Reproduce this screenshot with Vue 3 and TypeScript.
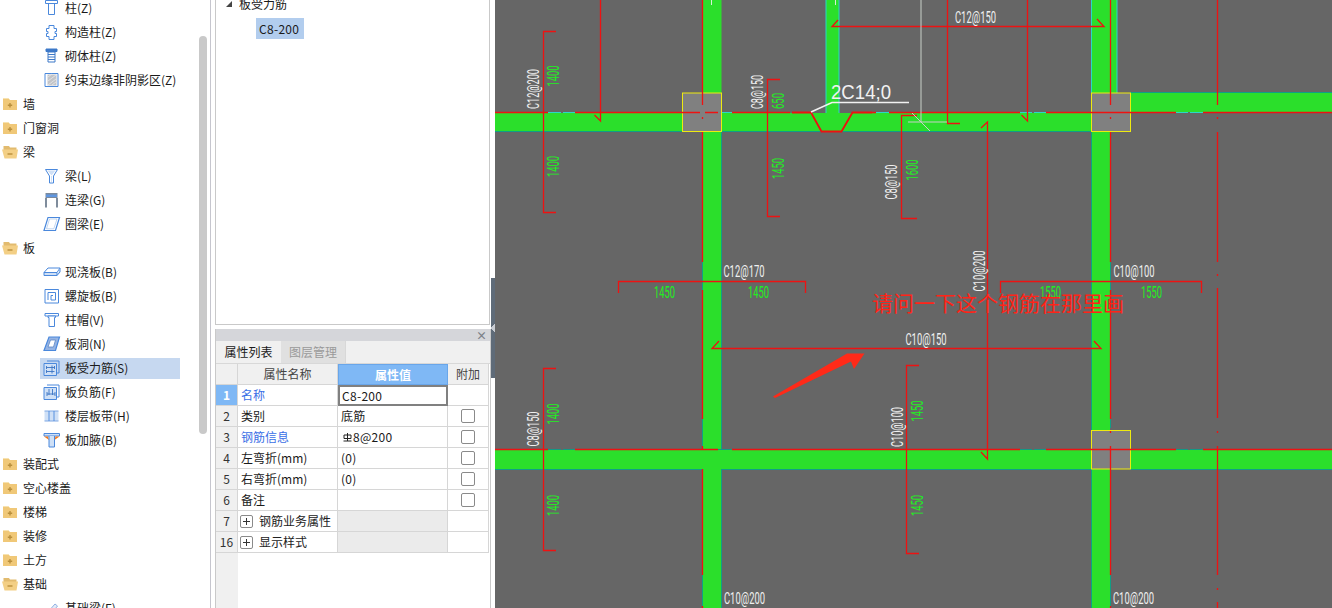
<script setup lang="ts">
type Shape = { d: string; s?: string; f?: string; w?: number }
type Row = { label: string; kind: 'closed' | 'open' | 'leaf'; icon?: string; selected?: boolean }

const B = '#4a88dc'
const L = '#cfe0f6'
const icons: Record<string, Shape[]> = {
  column: [{ d: 'M2.5 1.5h12v3h-12zM5.5 4.5h6v11h-6z', s: B, f: '#fff' }],
  gz: [{ d: 'M6 2.5h5v3h2.5v3H12v2h1.5v3H11v3H6v-3H3.5v-3H5v-2H3.5v-3H6z', s: B, f: '#fff' }],
  brick: [
    { d: 'M3 2h11v2.5H3z', s: '#3d78c8', f: '#3d78c8' },
    { d: 'M5 5h7v10H5z', s: '#3d78c8', f: '#fff' },
    { d: 'M5 7.5h7M5 10h7M5 12.5h7', s: '#3d78c8' }
  ],
  edge: [
    { d: 'M2 2.5h13v13H2z', s: B, f: '#fff' },
    { d: 'M4.5 3.5h9v11h-9z', f: '#c2c4c8' },
    { d: 'M5 6l4-3M5 10l8-6M5 14l8-6M9 14l4-3', s: '#e8e8ea', w: 0.8 }
  ],
  beam: [
    { d: 'M2.5 2.5h12l-4 6.5v7h-4V9z', s: B, f: '#fff' },
    { d: 'M4.5 3.5h8l-4 5z', f: L },
    { d: 'M8.5 9v6', s: L }
  ],
  lintel: [
    { d: 'M2.5 2h12v5h-12z', f: '#7c8a9c' },
    { d: 'M3 3.5h11v2.5H3z', f: '#5f96e0' },
    { d: 'M3 7v9.5M14 7v9.5', s: '#7f8c9c', w: 2 }
  ],
  ring: [
    { d: 'M5 2.5h11.5L12.5 15.5H1z', s: B, f: '#fff', w: 1.2 },
    { d: 'M6.5 4h7.5L10.8 13.8H3.5z', s: '#a8c4ea', w: 0.7 }
  ],
  slab: [
    { d: 'M5 5h12l-3 4.5H1z', s: B, f: '#fff' },
    { d: 'M1 9.5h13v3H1zM14 12.5l3-3.5V5', s: B, f: L }
  ],
  spiral: [
    { d: 'M2 2.5h13.5v13.5H2z', s: B, f: '#fff' },
    { d: 'M5 13V5.5h7.5V13H8V8.5h2', s: B, f: 'none' }
  ],
  cap: [
    { d: 'M2 2.5h13.5V5H2z', s: B, f: '#fff' },
    { d: 'M5 5h7.5v1.5h-1V15.5H6V6.5H5z', s: B, f: '#fff' }
  ],
  hole: [
    { d: 'M6 2h10.5L12.5 15.5H1z', s: B, f: '#95b4e4', w: 1.2 },
    { d: 'M7.5 5h5L10.5 12H5z', s: '#5c86c6', f: '#fff', w: 0.8 }
  ],
  main: [
    { d: 'M1 4.5h12.5v12H1z', s: B, f: L },
    { d: 'M4 2h12v12h-2.5', s: B, f: 'none' },
    { d: 'M3.5 8.5h8M3.5 12.5h8M9 6.5v8M3.5 7v3M3.5 11v3M11.5 7v3', s: '#3a74c4', w: 0.9 }
  ],
  neg: [
    { d: 'M1 4.5h12.5v12H1z', s: B, f: L },
    { d: 'M4 2h12v12h-2.5', s: B, f: 'none' },
    { d: 'M6 6v6M9.5 6v6M4 11h8M4 9v4M12 9v4', s: '#3a74c4', w: 0.9 }
  ],
  strip: [
    { d: 'M1.5 4h14v10h-14z', f: '#cfe0f6' },
    { d: 'M1.5 4h14M1.5 14h14', s: '#7ea8e4' },
    { d: 'M6 4v10M11 4v10', s: B, w: 0.9 }
  ],
  haunch: [
    { d: 'M1 2.5h15.5V5H1z', s: B, f: '#cfe0f6' },
    { d: 'M1 5.5h4L6 9zM16.5 5.5h-4L11.500 9z', f: '#f47a1c' },
    { d: 'M6 5v11h5.500V5', s: B, f: L }
  ],
  base: [
    { d: 'M4 14L12 5l2.500 2L7 16z', s: '#8fb0e2', f: '#e4ecf8' }
  ]
}

const rows: Row[] = [
  { label: '柱(Z)', kind: 'leaf', icon: 'column' },
  { label: '构造柱(Z)', kind: 'leaf', icon: 'gz' },
  { label: '砌体柱(Z)', kind: 'leaf', icon: 'brick' },
  { label: '约束边缘非阴影区(Z)', kind: 'leaf', icon: 'edge' },
  { label: '墙', kind: 'closed' },
  { label: '门窗洞', kind: 'closed' },
  { label: '梁', kind: 'open' },
  { label: '梁(L)', kind: 'leaf', icon: 'beam' },
  { label: '连梁(G)', kind: 'leaf', icon: 'lintel' },
  { label: '圈梁(E)', kind: 'leaf', icon: 'ring' },
  { label: '板', kind: 'open' },
  { label: '现浇板(B)', kind: 'leaf', icon: 'slab' },
  { label: '螺旋板(B)', kind: 'leaf', icon: 'spiral' },
  { label: '柱帽(V)', kind: 'leaf', icon: 'cap' },
  { label: '板洞(N)', kind: 'leaf', icon: 'hole' },
  { label: '板受力筋(S)', kind: 'leaf', icon: 'main', selected: true },
  { label: '板负筋(F)', kind: 'leaf', icon: 'neg' },
  { label: '楼层板带(H)', kind: 'leaf', icon: 'strip' },
  { label: '板加腋(B)', kind: 'leaf', icon: 'haunch' },
  { label: '装配式', kind: 'closed' },
  { label: '空心楼盖', kind: 'closed' },
  { label: '楼梯', kind: 'closed' },
  { label: '装修', kind: 'closed' },
  { label: '土方', kind: 'closed' },
  { label: '基础', kind: 'open' },
  { label: '基础梁(F)', kind: 'leaf', icon: 'base' }
]

type Prop = { n: string; name: string; value?: string; check?: boolean; link?: boolean; group?: boolean; active?: boolean; rebar?: boolean }
const props: Prop[] = [
  { n: '1', name: '名称', value: 'C8-200', link: true, active: true },
  { n: '2', name: '类别', value: '底筋', check: true },
  { n: '3', name: '钢筋信息', value: '8@200', check: true, link: true, rebar: true },
  { n: '4', name: '左弯折(mm)', value: '(0)', check: true },
  { n: '5', name: '右弯折(mm)', value: '(0)', check: true },
  { n: '6', name: '备注', value: '', check: true },
  { n: '7', name: '钢筋业务属性', group: true },
  { n: '16', name: '显示样式', group: true }
]

/* Drawing geometry, in the coordinates of the whole screenshot */
const green = [
  'M495 113H1091V131.500H495Z',
  'M702.500 0H721.500V608H702.500Z',
  'M826 0H839V113H826Z',
  'M1091 0H1117V93H1110V113H1091Z',
  'M1130 93H1332V112H1130Z',
  'M1091 131H1110V608H1091Z',
  'M495 450H1332V469H495Z'
]
const teal = [
  'M495 131.500H682M722 131.500H1091',
  'M721.500 131V450M721.500 469V608',
  'M495 469.500H702M722 469.500H1091M1130 469.500H1332',
  'M1130 92.500H1332',
  'M1091.500 131V430M1091.500 469V608',
  'M702.500 262V290M702.500 419V446M702.500 575V606M1110.500 262V290M1110.500 419V428M1110.500 575V606'
]
const cyan = [
  'M826 0V113M839 0V113',
  'M1091.500 0V93',
  'M1117 0V93',
  'M548 112.500H561M563 112.500H575M718 112.500H732M876 112.500H889M1020 112.500H1032M1034 112.500H1046M1176 112.500H1188M1190 112.500H1203'
]
const darkTeal = 'M548 449.500H561M563 449.500H575M718 449.500H732M862 449.500H875M877 449.500H890M1020 449.500H1032M1034 449.500H1046M1176 449.500H1188M1190 449.500H1203'
const squares = [
  { x: 682.500, y: 93, w: 39, h: 38.500 },
  { x: 1091.500, y: 93, w: 39, h: 38.500 },
  { x: 1091.500, y: 430.500, w: 39, h: 38.500 }
]
const redLines = [
  'M495 112.500H548M575 112.500H700M705 112.500H718M732 112.500H790M872 112.500H876M889 112.500H1020M1046 112.500H1176M1203 112.500H1332',
  'M495 449.500H548M575 449.500H718M732 449.500H1020M1046 449.500H1176M1203 449.500H1332',
  'M702.500 0V105M702.500 117V119M702.500 132V262M702.500 290V419M702.500 446V449.500M702.500 469V575M702.500 606V608',
  'M1110.500 0V105M1110.500 117V119M1110.500 132V262M1110.500 290V419M1110.500 431V433M1110.500 446V575M1110.500 606V608',
  'M1217.500 0V105M1217.500 117V119M1217.500 132V262M1217.500 274V276M1217.500 288V418M1217.500 431V433M1217.500 446V575M1217.500 588V590M1217.500 602V608',
  'M556 31.500H543.500V212.500H556',
  'M780 79.500H767.500V216.500H780',
  'M917 115.500H901.500V218.500H917',
  'M556 368.500H543.500V550.500H556',
  'M919 365.500H906.500V553.500H919',
  'M600.500 0V121L594.500 115',
  'M838 20L832 26.500H1104L1097 19',
  'M947.500 0V123.500H960',
  'M1027.500 0V121L1021.500 115',
  'M981 128L987.500 122V459L981 452',
  'M618.500 293V281.500H805.500V293',
  'M1000.500 293V281.500H1201.500V293',
  'M719 341L712 348.500H1101L1094 341'
]
type Label = { t: string; x: number; y: number; w: number; rot?: boolean }
const whites: Label[] = [
  { t: 'C12@200', x: 533.500, y: 89, w: 40, rot: true },
  { t: 'C8@150', x: 757, y: 92, w: 34, rot: true },
  { t: 'C8@150', x: 891, y: 182, w: 35, rot: true },
  { t: 'C10@200', x: 979, y: 271, w: 41, rot: true },
  { t: 'C8@150', x: 533.500, y: 429, w: 35, rot: true },
  { t: 'C10@100', x: 897, y: 427, w: 40, rot: true },
  { t: 'C12@150', x: 975.500, y: 17.500, w: 41 },
  { t: 'C12@170', x: 744, y: 271, w: 41 },
  { t: 'C10@100', x: 1134, y: 271, w: 41 },
  { t: 'C10@150', x: 926, y: 339.500, w: 41 },
  { t: 'C10@200', x: 744.500, y: 598.500, w: 41 },
  { t: 'C10@200', x: 1133.500, y: 598.500, w: 41 }
]
const greens: Label[] = [
  { t: '1400', x: 553.500, y: 76, w: 21, rot: true },
  { t: '1400', x: 553.500, y: 166.500, w: 21, rot: true },
  { t: '650', x: 778, y: 101, w: 16, rot: true },
  { t: '1450', x: 778, y: 168.500, w: 21, rot: true },
  { t: '1600', x: 912, y: 170, w: 21, rot: true },
  { t: '1400', x: 553.500, y: 414, w: 21, rot: true },
  { t: '1400', x: 553.500, y: 505.500, w: 21, rot: true },
  { t: '1450', x: 917, y: 411, w: 21, rot: true },
  { t: '1450', x: 917, y: 505.500, w: 21, rot: true },
  { t: '1450', x: 664.500, y: 292, w: 21 },
  { t: '1450', x: 758.500, y: 292, w: 21 },
  { t: '1550', x: 1050.500, y: 292, w: 21 },
  { t: '1550', x: 1151.500, y: 292, w: 21 }
]
const labelTransform = (l: Label) =>
  `translate(${l.x} ${l.y})${l.rot ? ' rotate(-90)' : ''}`
</script>

<template>
  <div class="page">
    <aside class="tree">
      <ul class="tree-list">
        <li v-for="row in rows" :key="row.label" class="tree-row" :class="row.kind">
          <div class="tree-item" :class="{ selected: row.selected }">
            <svg v-if="row.kind === 'leaf' && row.icon" class="leaf-icon" viewBox="0 0 18 18" width="18" height="18">
              <path
                v-for="(p, i) in icons[row.icon]"
                :key="i"
                :d="p.d"
                :stroke="p.s || 'none'"
                :fill="p.f || 'none'"
                :stroke-width="p.w || 1"
              />
            </svg>
            <svg v-else-if="row.kind === 'closed'" class="folder" viewBox="0 0 18 16" width="18" height="16">
              <path d="M2 2.500h5.500l1.500 1.500h7v10H2z" fill="#f0c878" />
              <path d="M2 2.500h5.500L9 4" fill="none" stroke="#f7e2b0" />
              <path d="M9 7v4.500M6.800 9.250h4.400" stroke="#b98f3c" stroke-width="1.400" />
            </svg>
            <svg v-else-if="row.kind === 'open'" class="folder" viewBox="0 0 18 16" width="18" height="16">
              <path d="M2.500 2h5.500l1 1.500h6.500V6H2.500z" fill="#e2bb6f" />
              <path d="M1 5.500h16l-1.500 9h-12z" fill="#f3cf85" />
              <path d="M6.500 10h5" stroke="#b98f3c" stroke-width="1.400" />
            </svg>
            <span class="tree-label">{{ row.label }}</span>
          </div>
        </li>
      </ul>
      <div class="scroll-thumb"></div>
    </aside>

    <section class="middle">
      <div class="layers">
        <div class="layer-head"><i class="caret"></i><span>板受力筋</span></div>
        <div class="layer-chip">C8-200</div>
      </div>

      <div class="props">
        <div class="props-title"><span class="close">×</span></div>
        <div class="tabs">
          <span class="tab on">属性列表</span>
          <span class="tab">图层管理</span>
        </div>
        <div class="grid">
          <div class="grid-row head">
            <div class="c num"></div>
            <div class="c name">属性名称</div>
            <div class="c value">属性值</div>
            <div class="c extra">附加</div>
          </div>
          <div v-for="p in props" :key="p.n" class="grid-row" :class="{ group: p.group }">
            <div class="c num" :class="{ active: p.active }">{{ p.n }}</div>
            <div class="c name" :class="{ link: p.link }">
              <i v-if="p.group" class="plus"></i>{{ p.name }}
            </div>
            <div class="c value" :class="{ editing: p.active }">
              <svg v-if="p.rebar" class="rebar" viewBox="0 0 9 9" width="9" height="9" aria-label="HRB">
                <path d="M1 2h7v3.500H1zM4.500 0v8M.500 8h8" fill="none" stroke="#222" stroke-width="1" />
              </svg>{{ p.value }}
            </div>
            <div class="c extra"><i v-if="p.check" class="check"></i></div>
          </div>
          <div class="grid-fill"><div class="fill-num"></div></div>
        </div>
      </div>
    </section>

    <div class="splitter"><i class="split-grip"></i></div>

    <main class="canvas">
      <svg viewBox="495 0 837 608" width="837" height="608" class="cad">
        <rect x="495" y="0" width="837" height="608" fill="#666666" />
        <path v-for="d in green" :key="d" :d="d" fill="#2bdf2b" />
        <path v-for="d in teal" :key="d" :d="d" stroke="#0f9f85" fill="none" />
        <path v-for="d in cyan" :key="d" :d="d" stroke="#2ad8c8" fill="none" />
        <path :d="darkTeal" stroke="#109a86" fill="none" />
        <rect
          v-for="s in squares"
          :key="s.x + '-' + s.y"
          :x="s.x"
          :y="s.y"
          :width="s.w"
          :height="s.h"
          fill="#808080"
          stroke="#eeea10"
        />
        <path d="M711.500 0V5M835.500 0V5" stroke="#d8f0d8" fill="none" />
        <path v-for="d in redLines" :key="d" :d="d" stroke="#ee1212" stroke-width="1.300" fill="none" />
        <path d="M792 112.500H811L821.500 131.500H841.500L852.500 112.500H872" stroke="#ee1010" stroke-width="1.800" fill="none" />
        <path d="M811 112L832 102.500H909" stroke="#f2f2f2" stroke-width="1.600" fill="none" />
        <path d="M921 0V122M908 122H947M912 113L930 131" stroke="#c8d0c8" fill="none" />
        <path d="M773 396.500L847 353.500L864.500 353.500L854 369L851 361.500L775 398Z" fill="#ff2a18" />
        <text x="831" y="99" textLength="60" lengthAdjust="spacingAndGlyphs" class="leader">2C14;0</text>
        <text
          v-for="l in whites"
          :key="l.t + l.x + l.y"
          :transform="labelTransform(l)"
          :textLength="l.w"
          lengthAdjust="spacingAndGlyphs"
          text-anchor="middle"
          dominant-baseline="central"
          class="cad-white"
        >{{ l.t }}</text>
        <text
          v-for="l in greens"
          :key="l.t + l.x + l.y"
          :transform="labelTransform(l)"
          :textLength="l.w"
          lengthAdjust="spacingAndGlyphs"
          text-anchor="middle"
          dominant-baseline="central"
          class="cad-green"
        >{{ l.t }}</text>
        <text x="872" y="311" class="note">请问一下这个钢筋在那里画</text>
      </svg>
    </main>
  </div>
</template>

<style scoped>
.page {
  display: flex;
  width: 1332px;
  height: 608px;
  overflow: hidden;
  background: #fff;
  font-family: "Noto Sans CJK SC", "Liberation Sans", sans-serif;
  font-size: 12px;
  color: #1a1a1a;
}
.tree {
  position: relative;
  flex: none;
  box-sizing: border-box;
  width: 211px;
  height: 608px;
  margin-right: 4px;
  border-right: 1px solid #c6c6ce;
  overflow: hidden;
}
.tree-list {
  margin: -4px 0 0;
  padding: 0;
  list-style: none;
}
.tree-row {
  height: 24px;
  display: flex;
  align-items: center;
}
.tree-row.leaf {
  padding-left: 40px;
}
.tree-item {
  display: flex;
  align-items: center;
  height: 21px;
  width: 140px;
  box-sizing: border-box;
  white-space: nowrap;
}
.tree-row.leaf .tree-item {
  padding-left: 3px;
}
.tree-row.closed .tree-item,
.tree-row.open .tree-item {
  padding-left: 1px;
}
.tree-item.selected {
  background: #c6d8f0;
}
.leaf-icon {
  flex: none;
  margin-right: 4px;
}
.folder {
  flex: none;
  margin-right: 4px;
}
.tree-label {
  line-height: 21px;
  padding-bottom: 2px;
}
.scroll-thumb {
  position: absolute;
  left: 199px;
  top: 36px;
  width: 8px;
  height: 398px;
  border-radius: 4px;
  background: #c9c9c9;
}
.middle {
  flex: none;
  width: 276px;
  display: flex;
  flex-direction: column;
}
.layers {
  box-sizing: border-box;
  height: 325px;
  margin-right: 1px;
  border: 1px solid #c9c9c9;
  border-top: 0;
  padding: 0 0 0 10px;
}
.layer-head {
  display: flex;
  align-items: center;
  height: 17px;
  margin-top: -5px;
  gap: 7px;
}
.caret {
  width: 0;
  height: 0;
  margin-top: 1px;
  border-style: solid;
  border-width: 0 0 6px 6px;
  border-color: transparent transparent #444 transparent;
}
.layer-chip {
  width: 48px;
  height: 21px;
  margin: 6px 0 0 30px;
  padding-left: 3px;
  box-sizing: border-box;
  line-height: 21px;
  letter-spacing: 0.3px;
  background: #b2cdee;
}
.props {
  flex: 1;
  margin-top: 4px;
  display: flex;
  flex-direction: column;
  border-right: 1px solid #c9c9c9;
  border-left: 1px solid #c9c9c9;
  box-sizing: border-box;
  min-height: 0;
}
.props-title {
  height: 12px;
  background: #d5d6da;
  display: flex;
  justify-content: flex-end;
  align-items: center;
  padding-right: 3px;
}
.close {
  font-size: 11px;
  line-height: 12px;
  font-weight: 700;
  color: #7c8088;
}
.tabs {
  display: flex;
  height: 22px;
  background: #f0f0f0;
  border-bottom: 1px solid #d8d8d8;
  box-sizing: content-box;
}
.tab {
  box-sizing: border-box;
  height: 22px;
  line-height: 22px;
  text-align: center;
  width: 65px;
  color: #9a9a9a;
  background: #e0e0e0;
  border-right: 1px solid #d8d8d8;
}
.tab.on {
  color: #1a1a1a;
  background: #f0f0f0;
  border-right: 0;
}
.grid {
  flex: 1;
  display: flex;
  flex-direction: column;
  width: 273px;
  min-height: 0;
}
.grid-row {
  display: flex;
  flex: none;
  height: 21px;
}
.c {
  box-sizing: border-box;
  height: 21px;
  line-height: 20px;
  border-right: 1px solid #d6d6d6;
  border-bottom: 1px solid #d6d6d6;
  white-space: nowrap;
}
.num {
  flex: none;
  width: 22px;
  text-align: center;
  background: #f0f0f0;
  color: #333;
}
.num.active {
  background: #7fb8f5;
  color: #fff;
  font-weight: 700;
}
.name {
  flex: none;
  width: 100px;
  padding-left: 3px;
}
.name.link {
  color: #3a6fe6;
}
.value {
  flex: none;
  width: 110px;
  padding-left: 3px;
  letter-spacing: 0.3px;
}
.extra {
  flex: none;
  width: 41px;
  display: flex;
  align-items: center;
  justify-content: center;
}
.head .c {
  background: #f0f0f0;
  text-align: center;
  padding: 0;
  color: #444;
}
.head .value {
  background: #7fb8f5;
  color: #fff;
  font-weight: 700;
  letter-spacing: 0;
  border: 1px solid #69a6ea;
}
.editing {
  background: #fff;
  border: 2px solid #808080;
  line-height: 18px;
  padding-left: 2px;
}
.check {
  width: 12px;
  height: 12px;
  border: 1px solid #8a8a8a;
  border-radius: 2px;
  background: #fff;
}
.group .value {
  background: #ebebeb;
}
.group .name {
  display: flex;
  align-items: center;
  padding-left: 2px;
  color: #222;
}
.plus {
  position: relative;
  flex: none;
  box-sizing: border-box;
  width: 13px;
  height: 13px;
  margin-right: 6px;
  border: 1px solid #8a8a8a;
  border-radius: 2px;
  background:
    linear-gradient(#333, #333) center / 7px 1px no-repeat,
    linear-gradient(#333, #333) center / 1px 7px no-repeat,
    #fff;
}
.rebar {
  margin: 0 1px 3px 2px;
  vertical-align: middle;
}
.grid-fill {
  flex: 1;
}
.fill-num {
  width: 22px;
  height: 100%;
  background: #f0f0f0;
}
.splitter {
  flex: none;
  width: 4px;
  height: 608px;
  display: flex;
  flex-direction: column;
}
.split-grip {
  display: block;
  width: 4px;
  height: 100px;
  margin-top: 278px;
  background:
    linear-gradient(135deg, transparent 50%, #c8ccd2 50%) 0 46px / 4px 4px no-repeat,
    linear-gradient(45deg, transparent 50%, #c8ccd2 50%) 0 50px / 4px 4px no-repeat,
    #5f6b78;
}
.canvas {
  flex: 1;
  min-width: 0;
}
.cad {
  display: block;
}
.cad-white {
  font-family: Roboto, "Liberation Sans", sans-serif;
  font-weight: 400;
  font-size: 16px;
  fill: #f0f0f0;
}
.cad-green {
  font-family: Roboto, "Liberation Sans", sans-serif;
  font-weight: 400;
  font-size: 16px;
  fill: #1ff01f;
}
.leader {
  font-family: "Liberation Sans", sans-serif;
  font-size: 21px;
  fill: #f2f2f2;
}
.note {
  font-family: "Noto Sans CJK SC", sans-serif;
  font-size: 21px;
  fill: #ff2418;
}
</style>
